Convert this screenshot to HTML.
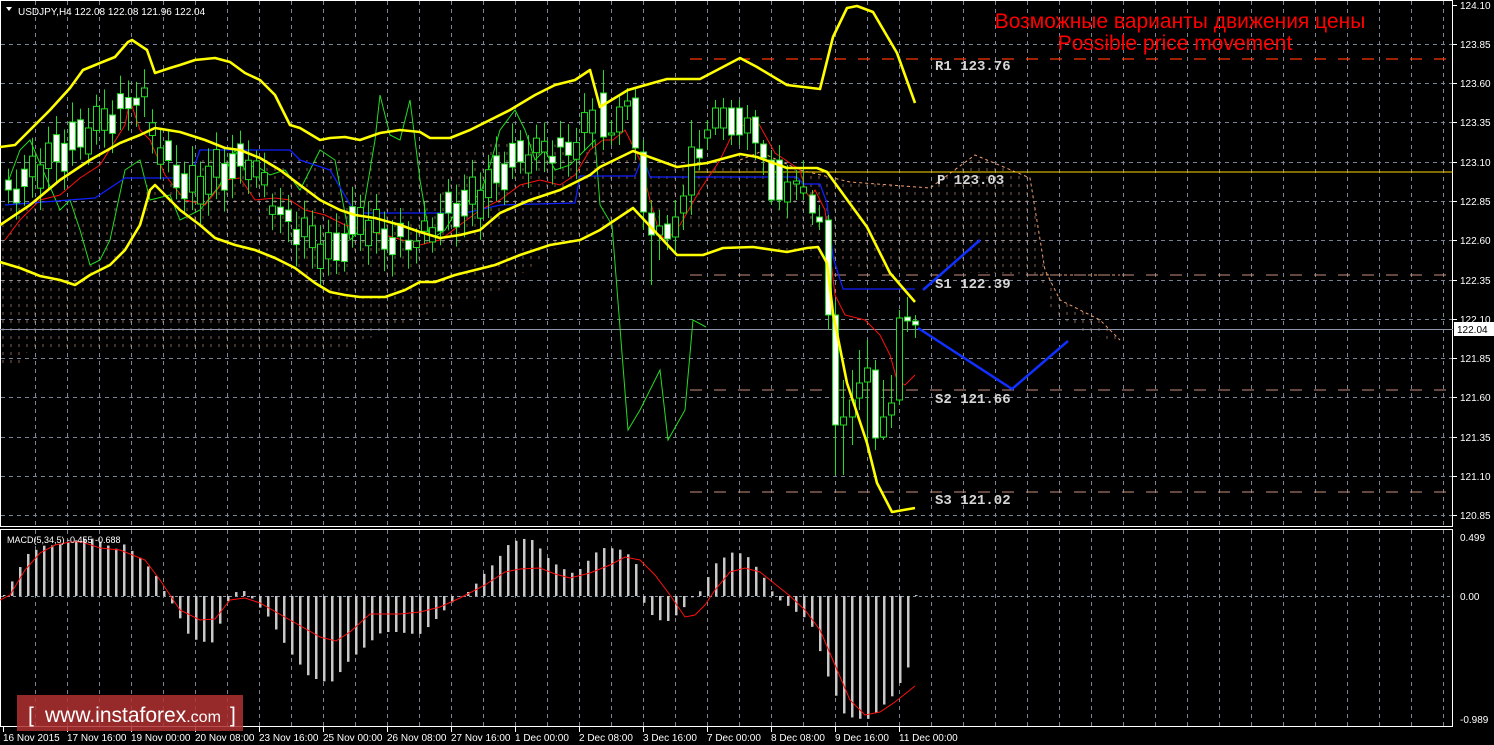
<!DOCTYPE html>
<html><head><meta charset="utf-8"><style>
html,body{margin:0;padding:0;background:#000;overflow:hidden}
svg{display:block}
text{font-family:"Liberation Sans",sans-serif}
text.mono{font-family:"Liberation Mono",monospace;font-weight:bold}
</style></head><body>
<svg id="s" width="1494" height="745" xmlns="http://www.w3.org/2000/svg">
<defs>
<pattern id="hatch" width="8" height="8" patternUnits="userSpaceOnUse">
<line x1="3" y1="0" x2="3" y2="3" stroke="#e8b090" stroke-width="1"/>
</pattern>
</defs>
<rect width="1494" height="745" fill="#000"/>
<g id="grid"></g>
<rect x="0.5" y="0.5" width="1452" height="526" fill="none" stroke="#fff"/>
<rect x="0.5" y="529.5" width="1452" height="197" fill="none" stroke="#fff"/>
<polygon points="0,203 30,203 60,203 130,200 135,185 160,185 190,170 200,160 330,160 340,150 360,145 420,150 470,150 500,140 560,145 600,150 640,160 660,170 740,160 760,152 800,170 850,182 930,188 975,155 1030,178 1045,270 1060,300 1100,320 1120,340 1110,340 1080,330 1050,310 1040,275 900,270 860,268 780,250 700,230 600,230 560,245 500,290 440,310 400,325 350,347 130,347 30,347 20,365 0,365" fill="url(#hatch)" opacity="0.55"/>
<polyline points="740,160 760,152 800,170 850,182 930,188 975,155 1030,178 1045,270 1060,300 1100,320 1120,340" fill="none" stroke="#f0a070" stroke-dasharray="3,3"/>
<polyline points="1040,275 1060,275 1120,275" fill="none" stroke="#f0a070" stroke-dasharray="3,3"/>
<line x1="690" y1="59" x2="1453" y2="59" stroke="#ff3300" stroke-width="1.3" stroke-dasharray="12,12"/>
<line x1="690" y1="172" x2="1453" y2="172" stroke="#ffd700" stroke-width="1"/>
<line x1="690" y1="275" x2="1453" y2="275" stroke="#c89080" stroke-dasharray="12,12"/>
<line x1="690" y1="390" x2="1453" y2="390" stroke="#c89080" stroke-dasharray="12,12"/>
<line x1="690" y1="492" x2="1453" y2="492" stroke="#c89080" stroke-dasharray="12,12"/>
<line x1="0" y1="329.5" x2="1453" y2="329.5" stroke="#8a96a8" stroke-width="1"/>
<g font-size="14" fill="#d8d8d8">
<text class="mono" x="935" y="70">R1 123.76</text>
<text class="mono" x="937" y="184">P 123.03</text>
<text class="mono" x="935" y="288">S1 122.39</text>
<text class="mono" x="935" y="403">S2 121.66</text>
<text class="mono" x="935" y="504">S3 121.02</text>
</g>
<polyline fill="none" stroke="#22dd22" stroke-width="1" points="5,190 20,150 30,140 45,175 60,210 70,200 80,230 90,265 100,260 110,240 125,170 140,160 150,200 170,195 180,220 200,210 220,185 235,150 245,170 255,165 270,175 285,170 300,190 320,150 335,160 350,240 360,230 375,140 380,95 390,135 400,140 410,100 420,180 430,240 445,230 460,205 470,200 480,195 490,165 500,130 515,110 525,130 535,160 545,150 555,170 570,165 585,150 595,140 600,205 612,225 628,430 640,410 660,370 668,440 685,410 693,320 706,327"/>
<polyline fill="none" stroke="#ff1010" stroke-width="1" points="5,240 20,220 40,200 60,195 80,178 100,165 125,125 130,100 140,130 150,140 165,175 185,200 205,205 225,180 240,178 255,200 275,198 290,200 305,210 325,215 345,225 365,230 385,235 420,245 440,240 460,225 480,210 500,200 520,185 540,180 560,185 575,175 590,150 603,140 613,140 625,130 640,160 650,200 660,235 667,240 680,225 700,190 720,160 733,133 755,117 765,135 775,153 790,163 800,170 805,190 810,198 815,190 825,210 835,295 845,315 865,320 880,335 890,355 897,380 905,385 915,375"/>
<polyline fill="none" stroke="#1020ff" stroke-width="1.3" points="5,205 95,198 125,178 190,178 200,150 290,150 300,160 330,170 355,213 455,213 470,212 500,205 575,203 580,176 635,176 643,156 650,177 797,177 803,184 820,184 827,203 833,257 843,289 915,289"/>
<g id="candles"></g>
<g fill="none" stroke="#ffff00" stroke-width="2.6" stroke-linejoin="round">
<polyline points="0,147 15,145 30,130 50,110 70,88 83,70 100,63 115,57 128,42 132,40 147,50 155,73 170,68 180,65 195,60 215,58 230,62 245,73 260,80 275,95 290,125 300,128 320,140 330,138 345,137 360,140 380,133 400,130 420,132 430,138 450,138 470,130 480,125 510,110 535,95 555,85 575,80 590,70 600,107 628,90 667,79 700,79 740,58 757,67 787,85 820,89 833,37 847,8 857,6 873,12 897,53 915,103"/>
<polyline points="0,225 30,205 60,180 90,160 120,143 140,135 155,128 180,132 205,140 225,148 240,150 260,158 280,170 300,185 320,200 340,210 355,215 375,218 400,225 420,232 440,238 460,235 480,230 500,213 530,200 560,190 590,175 600,167 633,151 677,167 707,163 740,154 757,157 787,168 817,168 827,172 867,227 890,273 915,302"/>
<polyline points="0,262 20,268 40,276 60,280 75,285 90,275 110,265 125,250 140,225 150,190 155,185 165,195 180,210 200,225 215,238 235,245 255,250 275,258 295,268 315,283 330,292 345,295 360,297 385,297 405,290 420,282 435,282 455,275 475,270 495,265 520,255 550,245 580,240 600,230 633,208 677,255 703,255 723,248 753,247 787,252 807,248 818,247 827,263 833,313 847,383 867,443 877,483 892,512 915,508"/>
</g>
<g fill="none" stroke="#1030ff" stroke-width="2.5">
<polyline points="923,290 980,240"/>
<polyline points="918,328 1012,389 1068,341"/>
</g>
<line x1="1" y1="596.5" x2="1452" y2="596.5" stroke="#8a96a8" stroke-dasharray="3,3"/>
<g id="bars"></g>
<polyline fill="none" stroke="#ff1010" stroke-width="1" points="0,600 10,595 25,570 40,553 55,545 70,542 82,542 100,548 120,550 145,560 160,580 180,610 200,620 215,619 230,600 245,598 260,603 290,620 320,637 336,641 350,632 370,614 385,614 400,614 420,612 440,607 460,598 485,585 505,572 520,569 540,568 555,574 570,578 590,573 610,565 625,557 640,560 655,575 670,595 685,617 695,615 705,605 715,590 730,572 745,568 760,572 775,584 790,596 805,610 820,630 835,665 850,700 865,715 880,712 895,702 915,686"/>
<text x="7" y="543" font-size="9" fill="#fff">MACD(5,34,5) -0.455 -0.688</text>
<g id="axis" font-size="10" fill="#fff"></g>
<rect x="1454" y="322" width="40" height="14" fill="#fff"/>
<text x="1457" y="333" font-size="10" fill="#000">122.04</text>
<path d="M6 7 L12 7 L9 11 Z" fill="#fff"/>
<text x="18" y="15" font-size="10" fill="#fff">USDJPY,H4  122.08 122.08 121.96 122.04</text>
<text x="1180" y="28" font-size="21" fill="#ff0000" text-anchor="middle">Возможные варианты движения цены</text>
<text x="1175" y="50" font-size="21" fill="#ff0000" text-anchor="middle">Possible price movement</text>
<rect x="17" y="695" width="226" height="36" fill="#b03030" opacity="0.85"/>
<text x="28" y="722" font-size="21" fill="#fff">[</text>
<text x="45" y="722" font-size="21" fill="#fff">www.instaforex<tspan font-size="16">.com</tspan></text>
<text x="230" y="722" font-size="21" fill="#fff">]</text>
</svg>
<script>
var NS="http://www.w3.org/2000/svg";
function el(p,t,a){var e=document.createElementNS(NS,t);for(var k in a)e.setAttribute(k,a[k]);p.appendChild(e);return e;}
var g=document.getElementById("grid");
var hy=[44,83,122,162,201,240,280,319,358,397,437,476,515];
hy.forEach(function(y){el(g,"line",{x1:1,y1:y+.5,x2:1452,y2:y+.5,stroke:"#7a8494","stroke-dasharray":"4,4"});});
for(var x=35;x<1452;x+=32){el(g,"line",{x1:x+.5,y1:1,x2:x+.5,y2:526,stroke:"#7a8494","stroke-dasharray":"4,4"});el(g,"line",{x1:x+.5,y1:530,x2:x+.5,y2:726,stroke:"#7a8494","stroke-dasharray":"4,4"});}
var ax=document.getElementById("axis");
var lab=["124.10","123.85","123.60","123.35","123.10","122.85","122.60","122.35","122.10","121.85","121.60","121.35","121.10","120.85"];
var ly=[5,44,83,122,162,201,240,280,319,358,397,437,476,515];
lab.forEach(function(t,i){el(ax,"line",{x1:1453,y1:ly[i]+.5,x2:1457,y2:ly[i]+.5,stroke:"#fff"});var e=el(ax,"text",{x:1460,y:ly[i]+4});e.textContent=t;});
[["0.499",537],["0.00",596],["-0.989",719]].forEach(function(a){var e=el(ax,"text",{x:1460,y:a[1]+4});e.textContent=a[0];});
var tl=["16 Nov 2015","17 Nov 16:00","19 Nov 00:00","20 Nov 08:00","23 Nov 16:00","25 Nov 00:00","26 Nov 08:00","27 Nov 16:00","1 Dec 00:00","2 Dec 08:00","3 Dec 16:00","7 Dec 00:00","8 Dec 08:00","9 Dec 16:00","11 Dec 00:00"];
tl.forEach(function(t,i){var x=3+i*64;el(ax,"line",{x1:x+.5,y1:727,x2:x+.5,y2:732,stroke:"#fff"});var e=el(ax,"text",{x:x,y:741});e.textContent=t;});
var kp=[[4,0],[12,12],[28,40],[44,52],[60,55],[90,55],[100,52],[115,48],[125,55],[140,40],[155,20],[165,0],[172,-10],[190,-40],[215,-45],[225,-10],[240,5],[250,-2],[270,-20],[290,-55],[310,-85],[330,-88],[350,-60],[380,-40],[420,-35],[450,-10],[470,3],[485,25],[510,55],[530,55],[550,35],[575,25],[600,45],[620,45],[635,40],[642,0],[650,-15],[665,-28],[680,-20],[690,-5],[700,5],[715,35],[730,45],[745,40],[765,15],[775,0],[790,-8],[810,-25],[830,-90],[845,-120],[870,-120],[895,-100],[915,-60]];
function hv(x){for(var i=1;i<kp.length;i++){if(x<=kp[i][0]){var a=kp[i-1],b=kp[i];return a[1]+(b[1]-a[1])*(x-a[0])/(b[0]-a[0]);}}return 0;}
var bg=document.getElementById("bars");
for(var x=4;x<=916;x+=8){var h=hv(x)+Math.sin(x*0.7)*3;var y=h>0?596-h:596;el(bg,"rect",{x:x-1,y:y,width:2.5,height:Math.abs(h),fill:"#c8c8c8"});}
var cg=document.getElementById("candles");
function candle(x,t,b,hi,lo,bear){el(cg,"line",{x1:x+.5,y1:hi,x2:x+.5,y2:lo,stroke:"#22dd22"});el(cg,"rect",{x:x-2.5,y:t,width:6,height:Math.max(2,b-t),fill:bear?"#fff":"#000",stroke:"#22dd22"});}
var mid=[[0,200],[30,175],[60,150],[90,130],[120,110],[140,90],[160,150],[190,190],[220,170],[250,160],[280,215],[300,230],[330,255],[360,220],[390,240],[420,240],[450,210],[480,195],[510,160],[540,150],[570,150],[600,110]];
function mv(x){for(var i=1;i<mid.length;i++){if(x<=mid[i][0]){var a=mid[i-1],b=mid[i];return a[1]+(b[1]-a[1])*(x-a[0])/(b[0]-a[0]);}}return 110;}
for(var x=8;x<600;x+=8){var c=mv(x)+Math.sin(x*1.3)*10;var len=6+Math.abs(Math.sin(x*0.37))*22;var bear=Math.sin(x*0.9)>0;candle(x,c-len/2,c+len/2,c-len/2-10-Math.abs(Math.cos(x))*10,c+len/2+10+Math.abs(Math.sin(x*2))*12,bear);}
var cs=[[603,93,137,70,150,1],[611,133,135,120,145,0],[619,107,132,95,145,0],[627,101,106,88,120,0],[635,98,148,88,160,1],[643,152,212,140,230,1],[651,213,235,200,285,1],[659,226,235,210,260,0],[667,224,239,215,250,1],[675,217,237,200,255,0],[683,196,213,185,230,0],[691,147,195,120,215,0],[699,149,158,130,170,1],[707,130,138,120,150,0],[715,108,128,100,135,0],[723,108,128,98,140,0],[731,108,135,100,145,1],[739,108,135,100,145,1],[747,118,133,105,150,0],[755,117,143,110,160,1],[763,144,158,140,175,1],[771,160,200,150,205,1],[779,160,200,145,210,1],[787,182,202,165,218,0],[796,181,184,170,200,0],[803,187,193,160,200,0],[812,195,213,190,225,1],[819,217,222,205,230,1],[828,220,315,215,330,1],[835,315,425,300,475,1],[843,417,425,380,475,0],[852,400,417,370,445,0],[859,383,398,350,410,0],[867,368,382,340,448,0],[875,370,438,360,450,1],[883,417,437,380,440,0],[891,403,415,375,428,0],[899,318,400,310,405,0],[907,317,321,297,332,1],[915,321,325,315,338,1]];
cs.forEach(function(c){candle(c[0],c[1],c[2],c[3],c[4],c[5]);});
</script>
</body></html>
